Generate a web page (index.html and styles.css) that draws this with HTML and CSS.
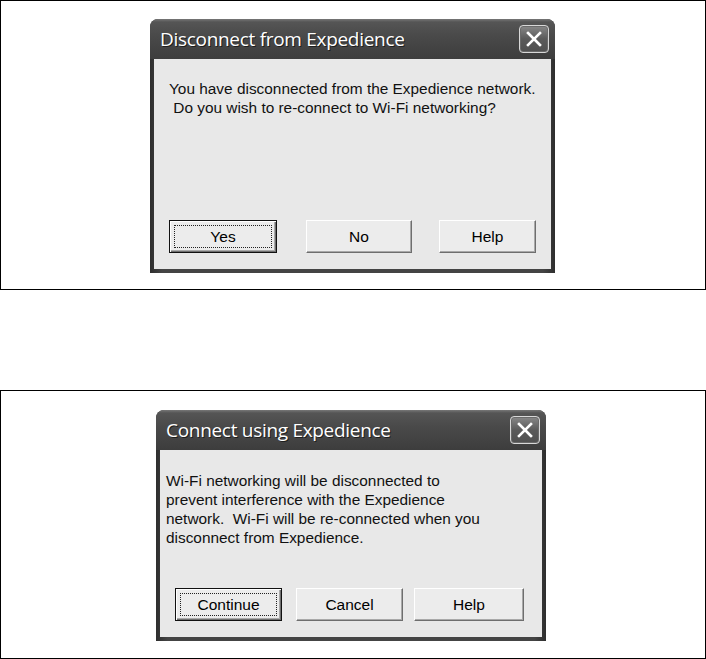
FILE: index.html
```html
<!DOCTYPE html>
<html lang="en">
<head>
    <meta charset="UTF-8">
    <title>Expedience dialogs</title>
    <link rel="stylesheet" href="styles.css">
</head>
<body>
    <!-- Disconnect dialog -->
    <div class="panel panel-top">
        <div class="dialog dialog-disconnect">
            <div class="titlebar">
                <span class="title">Disconnect from Expedience</span>
                <span class="close-btn">
                    <svg width="16" height="16" viewBox="0 0 16 16"><path d="M2 2 L14 14 M14 2 L2 14" stroke="#fff" stroke-width="2.6" stroke-linecap="square"/></svg>
                </span>
            </div>
            <div class="dialog-body">
                <p class="message message-wide">You have disconnected from the Expedience network.<br>&nbsp;Do you wish to re-connect to Wi-Fi networking?</p>
                <div class="button-row">
                    <button class="btn btn-default btn-yes"><span class="focus-ring">Yes</span></button>
                    <button class="btn btn-no">No</button>
                    <button class="btn btn-help-sm">Help</button>
                </div>
            </div>
        </div>
    </div>

    <!-- Connect dialog -->
    <div class="panel panel-bottom">
        <div class="dialog dialog-connect">
            <div class="titlebar">
                <span class="title">Connect using Expedience</span>
                <span class="close-btn">
                    <svg width="16" height="16" viewBox="0 0 16 16"><path d="M2 2 L14 14 M14 2 L2 14" stroke="#fff" stroke-width="2.6" stroke-linecap="square"/></svg>
                </span>
            </div>
            <div class="dialog-body">
                <p class="message message-narrow">Wi-Fi networking will be disconnected to<br>prevent interference with the Expedience<br>network.&nbsp; Wi-Fi will be re-connected when you<br>disconnect from Expedience.</p>
                <div class="button-row button-row-connect">
                    <button class="btn btn-default btn-continue"><span class="focus-ring">Continue</span></button>
                    <button class="btn btn-cancel">Cancel</button>
                    <button class="btn btn-help">Help</button>
                </div>
            </div>
        </div>
    </div>
</body>
</html>
```
FILE: styles.css
```css
* {
    box-sizing: border-box;
}

body {
    margin: 0;
    background: #fff;
    font-family: "Liberation Sans", Arial, sans-serif;
    color: #111;
}

/* Rahmen um die Screenshots */
.panel {
    width: 706px;
    border: 1px solid #000;
    display: flex;
    align-items: flex-start;
}

.panel-top {
    height: 290px;
    padding: 18px 0 0 149px;
}

.panel-bottom {
    margin-top: 100px;
    height: 269px;
    padding: 19px 0 0 155px;
}

/* Fenster */
.dialog {
    display: flex;
    flex-direction: column;
    background: linear-gradient(90deg, #2e2e2e, #444 3%, #444 97%, #2e2e2e);
    border-radius: 8px 8px 0 0;
}

.dialog-disconnect {
    width: 405px;
    height: 254px;
}

.dialog-connect {
    width: 390px;
    height: 231px;
}

.titlebar {
    height: 40px;
    display: flex;
    align-items: center;
    justify-content: space-between;
    padding: 0 6px 0 10px;
    border-radius: 8px 8px 0 0;
    background: linear-gradient(#777 0, #555 3px, #4a4a4a 40%, #3d3d3d 100%);
}

.title {
    color: #fff;
    font-family: "Open Sans", "DejaVu Sans", sans-serif;
    font-size: 19px;
    letter-spacing: -0.3px;
    text-shadow: 1px 1px 0 #1e1e1e;
}

.close-btn {
    width: 30px;
    height: 28px;
    display: flex;
    align-items: center;
    justify-content: center;
    border: 1px solid #d8d8d8;
    border-radius: 4px;
    background: linear-gradient(#888, #5a5a5a 50%, #505050);
    box-shadow: inset 0 0 0 1px #6a6a6a;
}

.dialog-body {
    flex: 1;
    margin: 0 4px 4px;
    background: #e8e8e8;
    display: flex;
    flex-direction: column;
    justify-content: space-between;
}

.message {
    margin: 0;
    font-size: 15.4px;
    line-height: 19px;
    white-space: nowrap;
}

.message-wide {
    padding: 20px 0 0 15px;
}

.message-narrow {
    padding: 21px 0 0 6px;
}

/* Buttons */
.button-row {
    display: flex;
    padding: 0 0 16px 15px;
}

.button-row-connect {
    padding-bottom: 16px;
}

.btn {
    height: 33px;
    padding: 0;
    display: flex;
    align-items: center;
    justify-content: center;
    font-family: "Liberation Sans", Arial, sans-serif;
    font-size: 15.5px;
    color: #000;
    background: #ececec;
    border: 1px solid;
    border-color: #fff #6e6e6e #6e6e6e #fff;
    box-shadow: inset -1px -1px 0 #a9a9a9;
}

.btn-default {
    padding: 4px;
    border: 1px solid #111;
    box-shadow: inset 1px 1px 0 #fff, inset -1px -1px 0 #6e6e6e, inset -2px -2px 0 #a9a9a9;
}

.focus-ring {
    flex: 1;
    align-self: stretch;
    display: flex;
    align-items: center;
    justify-content: center;
    border: 1px dotted #222;
}

.btn-yes { width: 108px; }
.btn-no { width: 106px; margin-left: 29px; }
.btn-help-sm { width: 97px; margin-left: 27px; }

.btn-continue { width: 107px; }
.btn-cancel { width: 107px; margin-left: 14px; }
.btn-help { width: 110px; margin-left: 11px; }
```
